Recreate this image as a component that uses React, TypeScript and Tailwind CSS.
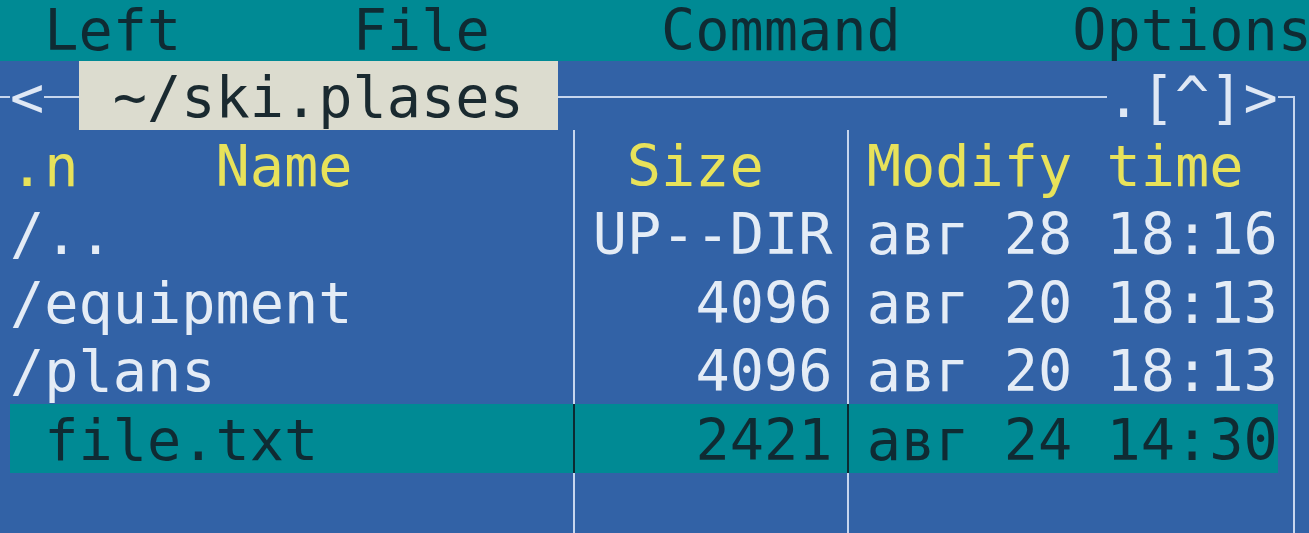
type Entry = { name: string; size: string; time: string; active?: boolean };

const entries: Entry[] = [
  { name: "/..", size: "UP--DIR", time: "авг 28 18:16" },
  { name: "/equipment", size: "4096", time: "авг 20 18:13" },
  { name: "/plans", size: "4096", time: "авг 20 18:13" },
  { name: " file.txt", size: "2421", time: "авг 24 14:30", active: true },
];

function Sep({ dark }: { dark?: boolean }) {
  return (
    <div className="w-[34.27px] shrink-0 flex">
      <div className={dark ? "ml-[15px] w-[2px] bg-[#0c2a33]" : "ml-[15px] w-[2px] bg-[#c6d6ee]"} />
    </div>
  );
}

function MenuBar() {
  return (
    <div className="h-[61px] shrink-0 bg-[#008a94] text-[#0f2b33] leading-[60.6px] whitespace-pre flex overflow-hidden">
      <div className="flex ml-[-24.27px] shrink-0">
        <span className="w-[68.54px] shrink-0" />
        <span className="w-[308.43px] shrink-0">Left</span>
        <span className="w-[308.43px] shrink-0">File</span>
        <span className="w-[411.24px] shrink-0">Command</span>
        <span className="w-[342.7px] shrink-0">Options</span>
      </div>
    </div>
  );
}

function TitleRow() {
  return (
    <div className="flex h-[68.6px] ml-[-24.27px] shrink-0">
      <div className="w-[34.27px] shrink-0 flex pt-[35px]">
        <div className="ml-[16px] flex-1 h-[2px] bg-[#c6d6ee]" />
      </div>
      <div className="w-[34.27px] shrink-0 pt-[5px] leading-[63.6px] text-[#dfe8f5]">&lt;</div>
      <div className="w-[34.27px] shrink-0 pt-[35px]">
        <div className="h-[2px] bg-[#c6d6ee]" />
      </div>
      <div className="w-[479.78px] shrink-0 bg-[#dcdccf] text-[#1a2a30] pt-[5px] leading-[63.6px] whitespace-pre">
        {" ~/ski.plases "}
      </div>
      <div className="w-[548.32px] shrink-0 pt-[35px]">
        <div className="h-[2px] bg-[#c6d6ee]" />
      </div>
      <div className="w-[171.35px] shrink-0 pt-[5px] leading-[63.6px] text-[#dfe8f5] whitespace-pre">.[^]&gt;</div>
      <div className="w-[34.27px] shrink-0 pt-[35px] flex">
        <div className="w-[17px] border-t-2 border-r-2 border-[#c6d6ee]" />
      </div>
    </div>
  );
}

function HeaderRow() {
  return (
    <div className="flex h-[68.6px] ml-[-24.27px] shrink-0 text-[#e8e25a]">
      <div className="w-[34.27px] shrink-0" />
      <div className="w-[548.32px] shrink-0 pt-[5px] leading-[63.6px] whitespace-pre">{".n    Name"}</div>
      <Sep />
      <div className="w-[239.89px] shrink-0 pt-[5px] leading-[63.6px] whitespace-pre">{" Size"}</div>
      <Sep />
      <div className="w-[411.24px] shrink-0 pt-[5px] leading-[63.6px] whitespace-pre">Modify time</div>
      <Sep />
    </div>
  );
}

function FileRow({ entry }: { entry?: Entry }) {
  const active = entry?.active;
  return (
    <div className="flex h-[68.6px] ml-[-24.27px] shrink-0">
      <div className="w-[34.27px] shrink-0" />
      <div
        className={
          active
            ? "flex shrink-0 bg-[#008a94] text-[#0f2b33]"
            : "flex shrink-0 text-[#e4ecf6]"
        }
      >
        <div className="w-[548.32px] shrink-0 pt-[5px] leading-[63.6px] whitespace-pre">{entry?.name}</div>
        <Sep dark={active} />
        <div className="w-[239.89px] shrink-0 pt-[5px] leading-[63.6px] text-right whitespace-pre">{entry?.size}</div>
        <Sep dark={active} />
        <div className="w-[411.24px] shrink-0 pt-[5px] leading-[63.6px] whitespace-pre">{entry?.time}</div>
      </div>
      <Sep />
    </div>
  );
}

export default function App() {
  return (
    <div className="w-[1309px] h-[533px] overflow-hidden bg-[#3262a6] font-['DejaVu_Sans_Mono',monospace] text-[56.9px] flex flex-col">
      <MenuBar />
      <TitleRow />
      <HeaderRow />
      {entries.map((e) => (
        <FileRow key={e.name} entry={e} />
      ))}
      <FileRow />
    </div>
  );
}
